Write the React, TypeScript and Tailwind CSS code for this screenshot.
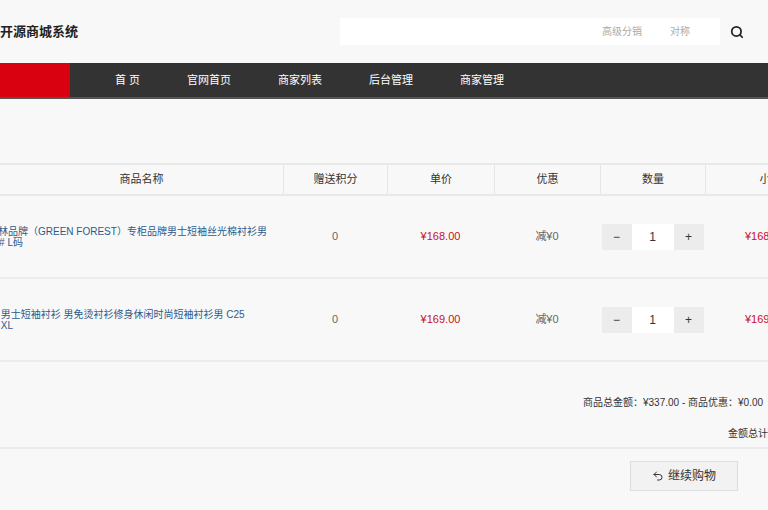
import { Search, Undo2 } from "lucide-react";

const rows = [
  { l1: "绿森林品牌（GREEN FOREST）专柜品牌男士短袖丝光棉衬衫男", l2: "装39# L码", price: "¥168.00" },
  { l1: "衬衫 男士短袖衬衫 男免烫衬衫修身休闲时尚短袖衬衫男 C25", l2: "白色 XL", price: "¥169.00" },
];

export default function App() {
  return (
    <div className="w-[768px] h-[510px] overflow-hidden bg-[#f8f8f8] text-[#333]" style={{ fontFamily: '"Liberation Sans", "Noto Sans CJK SC", sans-serif' }}>
      <div className="h-[63px] flex items-center">
        <div className="text-[13px] font-semibold text-[#222] w-[340px]">开源商城系统</div>
        <div className="w-[380px] h-[27px] bg-white flex items-center justify-end gap-[28px] pr-[30px] text-[10px] text-[#aaa]">
          <span>高级分销</span><span>对称</span>
        </div>
        <Search className="ml-[10px] w-[14px] h-[14px] text-[#222]" strokeWidth={3} />
      </div>
      <div className="h-[36px] bg-[#333] flex items-center text-[11px] text-white border-b-2 border-[#555]">
        <div className="w-[70px] h-full bg-[#d9000f]" />
        <div className="flex">
          <span className="ml-[45px]">首 页</span>
          <span className="ml-[47px]">官网首页</span>
          <span className="ml-[47px]">商家列表</span>
          <span className="ml-[47px]">后台管理</span>
          <span className="ml-[47px]">商家管理</span>
        </div>
      </div>
      <div className="h-[64px]" />
      <div className="w-[840px] text-[11px]">
        <div className="flex h-[33px] border-y-2 border-[#e8e8e8] items-center text-[#333]">
          <div className="w-[283px] text-center">商品名称</div>
          <div className="w-[104px] h-full flex items-center justify-center border-l border-[#e6e6e6]">赠送积分</div>
          <div className="w-[107px] h-full flex items-center justify-center border-l border-[#e6e6e6]">单价</div>
          <div className="w-[106px] h-full flex items-center justify-center border-l border-[#e6e6e6]">优惠</div>
          <div className="w-[105px] h-full flex items-center justify-center border-l border-[#e6e6e6]">数量</div>
          <div className="w-[130px] h-full flex items-center justify-center border-l border-[#e6e6e6]">小计</div>
        </div>
        {rows.map((r, i) => (
          <div key={i} className="flex h-[83px] items-center border-b-2 border-[#ececec]">
            <div className="w-[283px] overflow-hidden">
              <div className="-ml-[22px] text-[#2c5a8c] text-[10px] leading-[11px] w-[300px]">
                <div>{r.l1}</div><div>{r.l2}</div>
              </div>
            </div>
            <div className="w-[104px] text-center text-[#666]">0</div>
            <div className="w-[107px] text-center text-[#c8101e]">{r.price}</div>
            <div className="w-[106px] text-center text-[#666]">减¥0</div>
            <div className="w-[105px] flex justify-center">
              <div className="flex h-[26px] text-[12px]">
                <div className="w-[30px] bg-[#ececec] flex items-center justify-center">−</div>
                <div className="w-[42px] bg-white flex items-center justify-center">1</div>
                <div className="w-[30px] bg-[#ececec] flex items-center justify-center">+</div>
              </div>
            </div>
            <div className="w-[130px] pl-[40px] text-[#c8101e]">{r.price}</div>
          </div>
        ))}
      </div>
      <div className="h-[87px] border-b-2 border-[#ececec] text-[10px] text-[#333] flex flex-col pt-[33px] gap-[16px] w-[840px]">
        <div className="pl-[583px] w-full whitespace-nowrap">商品总金额：¥337.00 - 商品优惠：¥0.00</div>
        <div className="pl-[728px] w-full whitespace-nowrap">金额总计：¥337.00</div>
      </div>
      <div className="flex justify-end pr-[30px] pt-[12px]">
        <div className="w-[108px] h-[30px] bg-[#f2f2f2] border border-[#ddd] flex items-center justify-center gap-1 text-[12px] text-[#333]">
          <Undo2 className="w-[12px] h-[12px]" />继续购物
        </div>
      </div>
    </div>
  );
}
